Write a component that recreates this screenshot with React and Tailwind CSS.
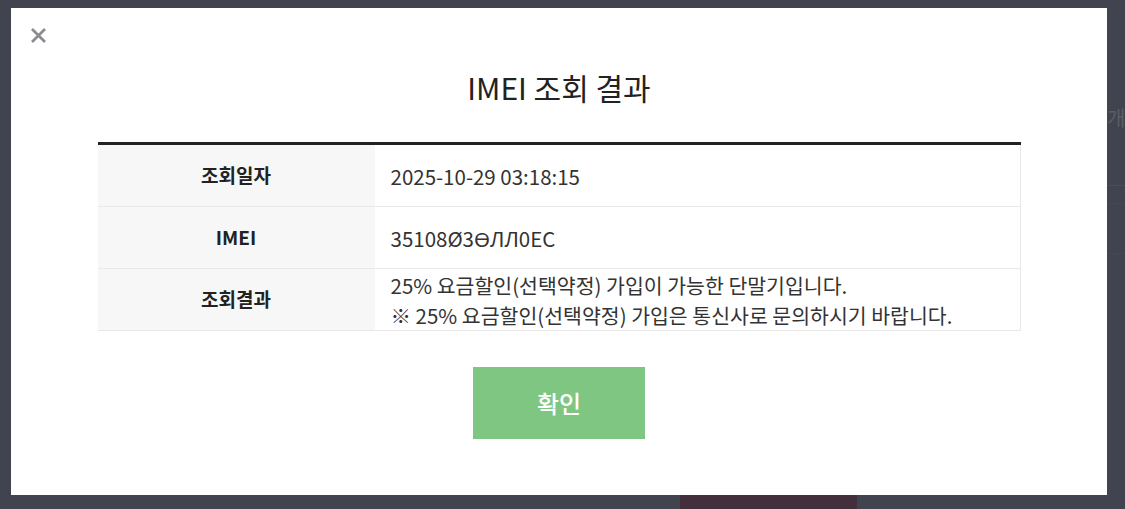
const rows = [
  { label: "조회일자", value: ["2025-10-29 03:18:15"] },
  { label: "IMEI", value: ["35108Ø3ƟЛЛ0EC"] },
  {
    label: "조회결과",
    value: [
      "25% 요금할인(선택약정) 가입이 가능한 단말기입니다.",
      "※ 25% 요금할인(선택약정) 가입은 통신사로 문의하시기 바랍니다.",
    ],
  },
];

export default function App() {
  return (
    <div
      className="flex h-[509px] w-[1125px] overflow-hidden bg-[#41444f]"
      style={{ fontFamily: '"Noto Sans CJK KR", "Noto Sans", sans-serif' }}
    >
      <div className="flex w-[1107px] shrink-0 flex-col pl-[11px] pt-[8px]">
        <div className="relative flex h-[487px] w-[1096px] flex-col items-center bg-white">
          <button className="absolute left-[18px] top-[18px] p-[1px] text-[#8a8c90]">
            <svg width="17" height="17" viewBox="0 0 17 17" fill="none" stroke="currentColor" strokeWidth="2.8">
              <path d="M2 2l13 13M15 2L2 15" />
            </svg>
          </button>

          <h1 className="mt-[57px] text-[30px] leading-[44px] font-normal text-[#222]">IMEI 조회 결과</h1>

          <div className="mt-[33px] w-[923px] border-t-[3px] border-[#222]">
            {rows.map((r) => (
              <div key={r.label} className="flex h-[62px] border-b border-[#e8e8e8]">
                <div className="flex w-[277px] items-center justify-center bg-[#f7f7f7] text-[19px] font-bold text-[#222]">
                  {r.label}
                </div>
                <div className="flex flex-1 flex-col justify-center border-r border-[#e8e8e8] pl-[16px] text-[20.5px] leading-[30px] text-[#333]">
                  {r.value.map((v) => (
                    <div key={v}>{v}</div>
                  ))}
                </div>
              </div>
            ))}
          </div>

          <button className="mt-[36px] h-[72px] w-[172px] bg-[#80c683] text-[24px] font-medium text-white">확인</button>
        </div>
        <div className="flex">
          <div className="ml-[669px] h-[14px] w-[177px] bg-[#432f3b]" />
        </div>
      </div>

      <div className="flex flex-1 flex-col overflow-hidden pt-[104px]">
        <div className="whitespace-nowrap text-[20px] leading-[28px] text-[#5a5d67]">개</div>
        <div className="mt-[53px] h-px bg-[#4b4e58]" />
        <div className="mt-[17px] h-px bg-[#5a3f48]" />
        <div className="mt-[49px] h-px bg-[#5a3f48]" />
      </div>
    </div>
  );
}
